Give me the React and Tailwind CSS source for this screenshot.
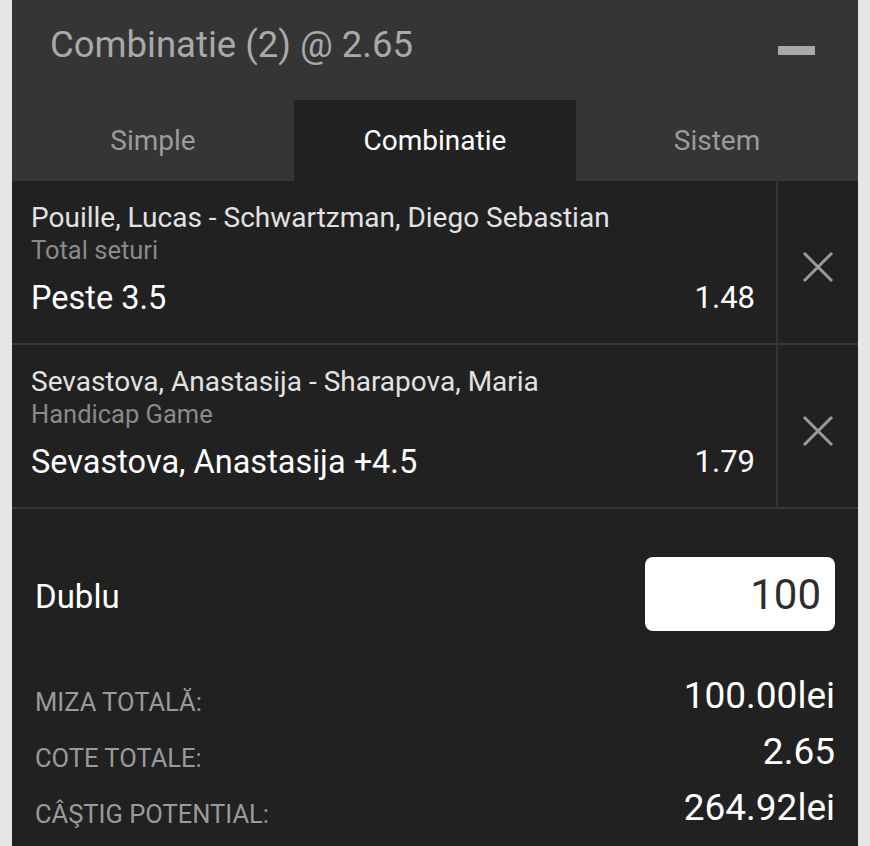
const font = { fontFamily: "Roboto, 'Noto Sans', sans-serif" };

const selections = [
  {
    event: "Pouille, Lucas - Schwartzman, Diego Sebastian",
    market: "Total seturi",
    pick: "Peste 3.5",
    odds: "1.48",
  },
  {
    event: "Sevastova, Anastasija - Sharapova, Maria",
    market: "Handicap Game",
    pick: "Sevastova, Anastasija +4.5",
    odds: "1.79",
  },
];

const totals = [
  { label: "MIZA TOTALĂ:", value: "100.00lei" },
  { label: "COTE TOTALE:", value: "2.65" },
  { label: "CÂŞTIG POTENTIAL:", value: "264.92lei" },
];

function CloseIcon() {
  return (
    <svg width="32" height="32" viewBox="0 0 32 32" fill="none">
      <path d="M2 2 L30 30 M30 2 L2 30" stroke="#9a9a9a" strokeWidth="3" />
    </svg>
  );
}

function SelectionRow({ item }) {
  return (
    <div className="flex h-[164px] border-b-2 border-[#363636]">
      <div className="flex flex-1 flex-col pl-[19px] pr-[21px] pt-[21px]">
        <div className="text-[28px] leading-[32px] text-[#e2e2e2]">{item.event}</div>
        <div className="text-[25.5px] leading-[32px] text-[#8a8a8a]">{item.market}</div>
        <div className="flex items-center justify-between pt-[2px] text-[32.5px] leading-[60px] text-white">
          <span>{item.pick}</span>
          <span className="text-[31px]">{item.odds}</span>
        </div>
      </div>
      <div className="flex w-[82px] items-center justify-center border-l-2 border-[#333] pt-[10px]">
        <CloseIcon />
      </div>
    </div>
  );
}

export default function App() {
  return (
    <div className="flex min-h-[846px] bg-[#e6e6e6] px-[12px]" style={font}>
      <div className="flex w-full flex-col bg-[#212121]">
        <div className="flex h-[100px] items-start justify-between bg-[#353535] pl-[38px] pr-[43px]">
          <h1 className="pt-[25px] text-[36.5px] leading-[40px] text-[#a9a9a9]">Combinatie (2) @ 2.65</h1>
          <div className="mt-[46px] h-[9px] w-[37px] bg-[#a8a8a8]" />
        </div>

        <div className="grid h-[81px] grid-cols-3 bg-[#353535] text-[28px]">
          <div className="flex items-center justify-center text-[#9b9b9b]">Simple</div>
          <div className="flex items-center justify-center bg-[#222] text-white">Combinatie</div>
          <div className="flex items-center justify-center text-[#9b9b9b]">Sistem</div>
        </div>

        {selections.map((item) => (
          <SelectionRow key={item.event} item={item} />
        ))}

        <div className="flex flex-col pl-[23px] pr-[23px]">
          <div className="mt-[48px] flex items-center justify-between">
            <span className="pt-[6px] text-[33px] text-white">Dublu</span>
            <div className="flex h-[74px] w-[190px] items-center justify-end rounded-[8px] bg-white pr-[14px] text-[42px] text-[#2d2d2d]">
              100
            </div>
          </div>

          <div className="mt-[37px] flex flex-col">
            {totals.map((row) => (
              <div key={row.label} className="flex h-[56px] items-baseline justify-between">
                <span className="relative top-[3px] text-[25.5px] leading-[56px] text-[#9a9a9a]">{row.label}</span>
                <span className="text-[37px] leading-[56px] text-white">{row.value}</span>
              </div>
            ))}
          </div>
        </div>
      </div>
    </div>
  );
}
